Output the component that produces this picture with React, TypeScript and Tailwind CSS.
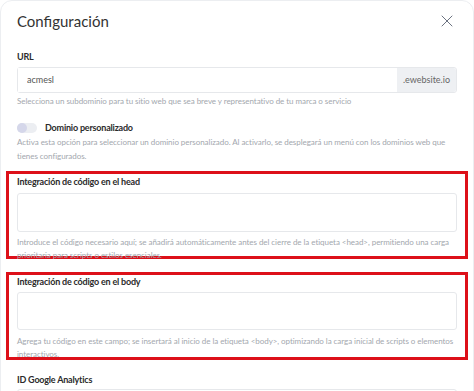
import { X } from "lucide-react";

const font = { fontFamily: "Lato, 'Open Sans', sans-serif" };

function Help({ className, children }: { className: string; children: React.ReactNode }) {
  return <p className={`text-[8px] tracking-[-0.05px] text-[#a3a7ae] ${className}`}>{children}</p>;
}

export default function App() {
  return (
    <div style={font} className="h-[391px] w-[474px] overflow-hidden bg-white">
      <div className="h-[420px] rounded-xl border border-[#eceef1] bg-white px-[16px] pt-[8px]">
        {/* header */}
        <div className="flex items-center justify-between">
          <h2 className="text-[15px] leading-[24px] text-[#333]">Configuración</h2>
          <X className="h-[20px] w-[20px] text-[#6b7280]" strokeWidth={1.2} />
        </div>

        {/* URL */}
        <label className="mt-[18px] block text-[9px] font-bold leading-[12px] tracking-[-0.2px] text-[#2b2b2b]">
          URL
        </label>
        <div className="mt-[4px] flex h-[26px] rounded-[3px] border border-[#e6e8eb]">
          <input
            readOnly
            value="acmesl"
            className="min-w-0 flex-1 bg-white px-[9px] text-[9px] text-[#555] outline-none"
          />
          <span className="flex items-center rounded-r-[3px] bg-[#eef0f3] px-[6px] text-[9px] text-[#666]">
            .ewebsite.io
          </span>
        </div>
        <Help className="mt-[2px] leading-[12px]">
          Selecciona un subdominio para tu sitio web que sea breve y representativo de tu marca o servicio
        </Help>

        {/* toggle */}
        <div className="mt-[15px] flex items-center gap-[8px]">
          <div className="flex h-[10px] w-[20px] items-center rounded-full bg-[#eceef2]">
            <div className="h-[10px] w-[10px] rounded-full bg-[#d5d7ea]" />
          </div>
          <span className="text-[9px] font-bold leading-[12px] tracking-[-0.2px] text-[#2b2b2b]">
            Dominio personalizado
          </span>
        </div>
        <Help className="mt-[1px] leading-[14px]">
          Activa esta opción para seleccionar un dominio personalizado. Al activarlo, se desplegará un menú con los
          dominios web que tienes configurados.
        </Help>

        {/* head */}
        <div className="-mx-[11px] mt-[8px] h-[88px] border-[3px] border-[#dd1019] px-[8px] pt-[2px]">
          <label className="block text-[9px] font-bold leading-[12px] tracking-[-0.2px] text-[#2b2b2b]">
            Integración de código en el head
          </label>
          <div className="mt-[5px] h-[39px] rounded-[3px] border border-[#e6e8eb]" />
          <Help className="mt-[4px] leading-[13px]">
            Introduce el código necesario aquí; se añadirá automáticamente antes del cierre de la etiqueta &lt;head&gt;,
            permitiendo una carga prioritaria para scripts o estilos esenciales.
          </Help>
        </div>

        {/* body */}
        <div className="-mx-[11px] mt-[13px] h-[88px] border-[3px] border-[#dd1019] px-[8px] pt-[1px]">
          <label className="block text-[9px] font-bold leading-[12px] tracking-[-0.2px] text-[#2b2b2b]">
            Integración de código en el body
          </label>
          <div className="mt-[4px] h-[38px] rounded-[3px] border border-[#e6e8eb]" />
          <Help className="mt-[5px] leading-[12.5px]">
            Agrega tu código en este campo; se insertará al inicio de la etiqueta &lt;body&gt;, optimizando la carga
            inicial de scripts o elementos interactivos.
          </Help>
        </div>

        {/* GA */}
        <label className="mt-[14px] block text-[9px] font-bold leading-[12px] tracking-[-0.2px] text-[#2b2b2b]">
          ID Google Analytics
        </label>
        <div className="mt-[3px] h-[26px] rounded-[3px] border border-[#e6e8eb]" />
      </div>
    </div>
  );
}
